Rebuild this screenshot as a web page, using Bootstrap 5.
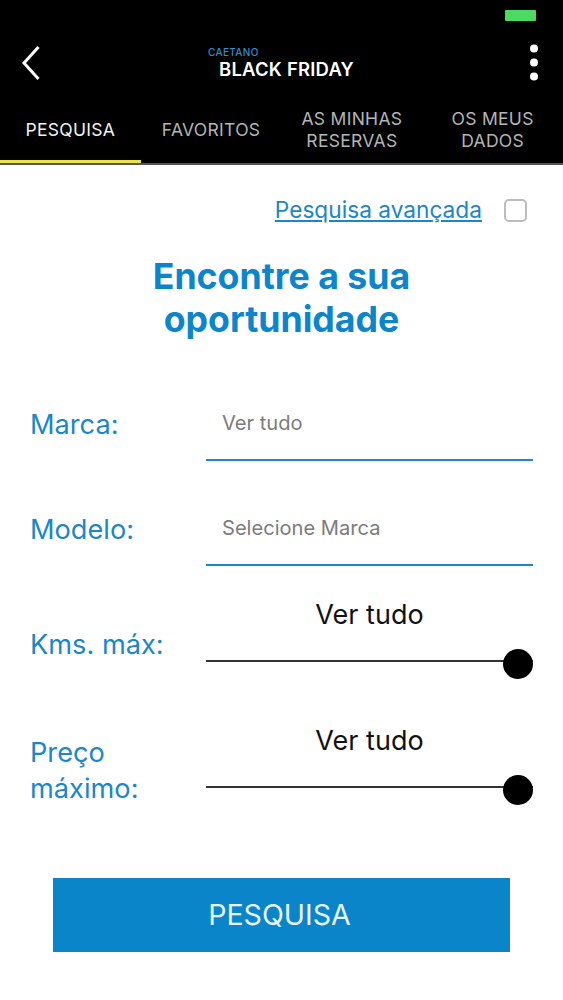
<!DOCTYPE html>
<html lang="pt">
<head>
<meta charset="utf-8">
<title>Black Friday</title>
<link href="https://cdn.jsdelivr.net/npm/bootstrap@5.3.0/dist/css/bootstrap.min.css" rel="stylesheet">
<style>
html,body{background:#fff;font-family:"Inter","Liberation Sans",sans-serif;height:1000px;overflow:hidden}
.app-top{background:#000;height:165px;border-bottom:2px solid #555}
.stat-bar{height:31px;padding:10px 27px 0 0}
.batt{width:31px;height:11px;background:#4cd964;border-radius:1px}
.tool-bar{height:64px;padding:0 23px 0 22px;margin-bottom:10px}
.tool-bar svg{display:block}
.logo-box{width:150px;margin-left:-2px}
.logo-top{color:#2f8fd0;font-size:10px;line-height:12px;font-weight:500;letter-spacing:.35px;height:12px}
.logo-main{color:#fff;font-size:18.5px;line-height:22.6px;font-weight:600;letter-spacing:.2px;padding-left:11px;white-space:nowrap}
.tab-row{height:58px}
.tab-item{width:25%;color:#b5b5b5;font-size:17.5px;line-height:22px;text-align:center;text-transform:uppercase;letter-spacing:.3px;border-bottom:3px solid transparent;padding-bottom:6px;text-decoration:none}
.tab-item.on{color:#f2f2f2;border-bottom-color:#ece24a}
.adv-row{height:90px;padding:0 36px 0 0}
.adv-link{color:#1b86c8;font-size:22.7px;margin-right:22px}
.adv-check.form-check-input{width:23px;height:23px;margin:0;border:2px solid #bcbcbc;border-radius:5px}
.page-title{color:#0c85ca;font-size:35.700px;line-height:43px;font-weight:700;text-align:center;margin:0 0 48px;height:86px}
.field-row{display:flex;align-items:center;padding:0 30px}
.field-label{width:176px;flex:none;color:#1b86c8;font-size:27.2px;line-height:36px;margin:0}
.field-control.form-control{flex:1;height:72px;border:0;border-bottom:2px solid #1b86c8;border-radius:0;font-size:20.1px;padding:0 0 2px 16px;color:#777;background:transparent;box-shadow:none}
.field-control::placeholder{color:#7b7b7b;opacity:1}
.select-row{height:72px;margin-bottom:33px}
.select-row.last-select{margin-bottom:25px}
.range-row{height:86px;margin-bottom:40px}
.range-row .field-label{margin-top:21px}
.range-box{flex:1;text-align:center;color:#111;font-size:27px;line-height:36px;padding-top:5px}
.range-box .form-range{height:30px;display:block;margin-top:13px}
.form-range.lever::-webkit-slider-runnable-track{height:2px;background:#333;border-radius:0}
.form-range.lever::-webkit-slider-thumb{width:30px;height:30px;background:#000;border:0;border-radius:50%;margin-top:-11px;-webkit-appearance:none;appearance:none}
.go-btn.btn{display:block;width:457px;height:74px;margin:75px 0 0 53px;padding:0 16px 0 12px;background:#0a85ca;border:0;border-radius:0;color:#e8f3fa;font-size:28.6px}
</style>
</head>
<body class="m-0">
<header class="app-top">
  <div class="stat-bar d-flex justify-content-end"><div class="batt"></div></div>
  <div class="tool-bar d-flex align-items-center justify-content-between">
    <svg width="18" height="36" viewBox="0 0 18 36" aria-label="Voltar"><path d="M16.500 2 2 18l14.500 16" fill="none" stroke="#fff" stroke-width="3"/></svg>
    <div class="logo-box">
      <div class="logo-top">CAETANO</div>
      <div class="logo-main">BLACK FRIDAY</div>
    </div>
    <svg width="12" height="38" viewBox="0 0 12 38" aria-label="Menu"><circle cx="6" cy="4.500" r="4" fill="#fff"/><circle cx="6" cy="18.500" r="4" fill="#fff"/><circle cx="6" cy="32.500" r="4" fill="#fff"/></svg>
  </div>
  <nav class="tab-row d-flex">
    <a class="tab-item on d-flex align-items-center justify-content-center" href="#">Pesquisa</a>
    <a class="tab-item d-flex align-items-center justify-content-center" href="#">Favoritos</a>
    <a class="tab-item d-flex align-items-center justify-content-center" href="#">As minhas<br>reservas</a>
    <a class="tab-item d-flex align-items-center justify-content-center" href="#">Os meus<br>dados</a>
  </nav>
</header>
<main>
  <div class="adv-row d-flex align-items-center justify-content-end">
    <a class="adv-link" href="#">Pesquisa avançada</a>
    <input class="form-check-input adv-check" type="checkbox" aria-label="Pesquisa avançada">
  </div>
  <h1 class="page-title">Encontre a sua<br>oportunidade</h1>
  <form>
    <div class="field-row select-row">
      <label class="field-label" for="marca">Marca:</label>
      <input id="marca" class="form-control field-control" placeholder="Ver tudo">
    </div>
    <div class="field-row select-row last-select">
      <label class="field-label" for="modelo">Modelo:</label>
      <input id="modelo" class="form-control field-control" placeholder="Selecione Marca">
    </div>
    <div class="field-row range-row">
      <label class="field-label" for="kms">Kms. máx:</label>
      <div class="range-box">Ver tudo<input id="kms" class="form-range lever" type="range" value="100"></div>
    </div>
    <div class="field-row range-row">
      <label class="field-label" for="preco">Preço máximo:</label>
      <div class="range-box">Ver tudo<input id="preco" class="form-range lever" type="range" value="100"></div>
    </div>
    <button class="btn go-btn" type="button">PESQUISA</button>
  </form>
</main>
<script src="https://cdn.jsdelivr.net/npm/bootstrap@5.3.0/dist/js/bootstrap.bundle.min.js"></script>
</body>
</html>
